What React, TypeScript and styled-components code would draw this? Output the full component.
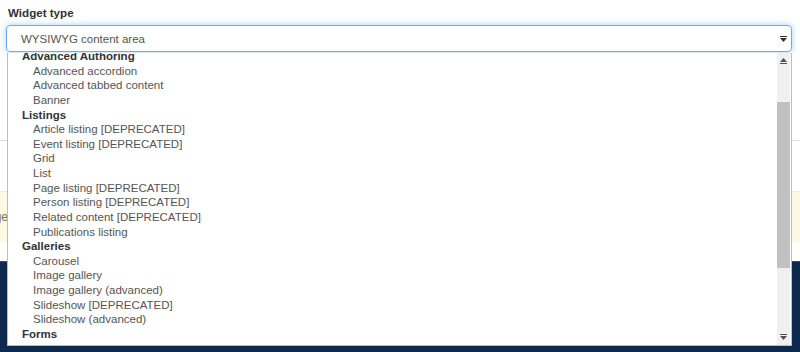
import React from "react";
import styled, { createGlobalStyle } from "styled-components";

const GlobalStyle = createGlobalStyle`
  html, body { margin: 0; padding: 0; background: #ffffff; }
  body { font-family: "Liberation Sans", Arial, sans-serif; }
  * { box-sizing: border-box; }
`;

const Page = styled.div`
  position: relative;
  width: 800px;
  height: 352px;
  overflow: hidden;
  display: flex;
  flex-direction: column;
  background: #ffffff;
`;

const Field = styled.div`
  display: flex;
  flex-direction: column;
  padding: 6px 8px 0 6px;
`;

const Label = styled.label`
  font-size: 11.6px;
  line-height: 14px;
  font-weight: 700;
  color: #333333;
  padding-left: 2px;
  margin-bottom: 5px;
`;

const SelectBox = styled.div`
  height: 27px;
  border: 1px solid #66afe9;
  border-radius: 4px;
  box-shadow: 0 0 6px rgba(102, 175, 233, 0.6);
  display: flex;
  align-items: center;
  justify-content: space-between;
  padding: 0 4px 0 14px;
  font-size: 11.5px;
  color: #555555;
`;

const Divider = styled.div`
  margin-top: 88px;
  height: 1px;
  background: #dddddd;
`;

const Alert = styled.div`
  margin-top: 50px;
  height: 51px;
  background: #fcf8e3;
  border-top: 1px solid #faebcc;
  display: flex;
  align-items: center;
  font-size: 12px;
  color: #8a6d3b;
`;

const AlertText = styled.span`
  margin-left: -34px;
`;

const Footer = styled.div`
  margin-top: 19px;
  flex: 1;
  background: #0d2a4e;
  border-top: 1px solid #2d4f7a;
`;

const Dropdown = styled.div`
  position: absolute;
  top: 53px;
  left: 7px;
  width: 785px;
  height: 293px;
  background: #ffffff;
  border: 1px solid #9fc2e6;
  border-top: none;
  display: flex;
`;

const ListViewport = styled.div`
  flex: 1;
  overflow: hidden;
`;

const List = styled.div`
  margin-top: -4px;
  display: flex;
  flex-direction: column;
`;

const Row = styled.div<{ $group?: boolean }>`
  height: 14.63px;
  line-height: 14.63px;
  font-size: 11.5px;
  white-space: nowrap;
  padding-left: ${(p) => (p.$group ? "14px" : "25px")};
  font-weight: ${(p) => (p.$group ? 700 : 400)};
  color: ${(p) => (p.$group ? "#333333" : "#555555")};
`;

const Scrollbar = styled.div`
  width: 13px;
  margin-right: 1px;
  background: #f0f0f0;
  display: flex;
  flex-direction: column;
`;

const ScrollButton = styled.div`
  height: 16px;
  display: flex;
  align-items: center;
  justify-content: center;
`;

const Track = styled.div`
  flex: 1;
  display: flex;
  flex-direction: column;
`;

const Thumb = styled.div`
  margin-top: 33px;
  height: 166px;
  background: #c1c1c1;
`;

const Caret = styled.svg`
  display: block;
`;

type Item = { label: string; group?: boolean };

const items: Item[] = [
  { label: "Advanced Authoring", group: true },
  { label: "Advanced accordion" },
  { label: "Advanced tabbed content" },
  { label: "Banner" },
  { label: "Listings", group: true },
  { label: "Article listing [DEPRECATED]" },
  { label: "Event listing [DEPRECATED]" },
  { label: "Grid" },
  { label: "List" },
  { label: "Page listing [DEPRECATED]" },
  { label: "Person listing [DEPRECATED]" },
  { label: "Related content [DEPRECATED]" },
  { label: "Publications listing" },
  { label: "Galleries", group: true },
  { label: "Carousel" },
  { label: "Image gallery" },
  { label: "Image gallery (advanced)" },
  { label: "Slideshow [DEPRECATED]" },
  { label: "Slideshow (advanced)" },
  { label: "Forms", group: true },
  { label: "Form" },
  { label: "Webform" },
];

const DownArrow = ({ color = "#333" }: { color?: string }) => (
  <Caret width="7" height="6" viewBox="0 0 7 6">
    <rect x="0" y="0" width="7" height="1" fill={color} />
    <polygon points="0,2 7,2 3.5,6" fill={color} />
  </Caret>
);

const UpArrow = ({ color = "#505050" }: { color?: string }) => (
  <Caret width="7" height="6" viewBox="0 0 7 6">
    <polygon points="3.5,0 7,4 0,4" fill={color} />
    <rect x="0" y="5" width="7" height="1" fill={color} />
  </Caret>
);

export default function App() {
  return (
    <>
      <GlobalStyle />
      <Page>
        <Field>
          <Label>Widget type</Label>
          <SelectBox>
            <span>WYSIWYG content area</span>
            <DownArrow />
          </SelectBox>
        </Field>
        <Divider />
        <Alert>
          <AlertText>Change</AlertText>
        </Alert>
        <Footer />
        <Dropdown>
          <ListViewport>
            <List>
              {items.map((it) => (
                <Row key={it.label} $group={it.group}>
                  {it.label}
                </Row>
              ))}
            </List>
          </ListViewport>
          <Scrollbar>
            <ScrollButton>
              <UpArrow />
            </ScrollButton>
            <Track>
              <Thumb />
            </Track>
            <ScrollButton>
              <DownArrow color="#505050" />
            </ScrollButton>
          </Scrollbar>
        </Dropdown>
      </Page>
    </>
  );
}
